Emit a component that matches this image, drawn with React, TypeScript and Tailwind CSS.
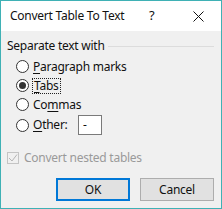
import React from "react";

const font = { fontFamily: '"Segoe UI", "Noto Sans", "Liberation Sans", sans-serif' };

function Radio({ checked }: { checked?: boolean }) {
    return (
        <span className="w-[13px] h-[13px] rounded-full border border-[#333] bg-white flex items-center justify-center shrink-0">
            {checked && <span className="w-[7px] h-[7px] rounded-full bg-[#333]" />}
        </span>
    );
}

function Option({ label, u, rest, checked, focus }: { label: string; u: string; rest: string; checked?: boolean; focus?: boolean }) {
    return (
        <div className="flex items-center h-[19px] pl-[9px] gap-[3px]">
            <Radio checked={checked} />
            <span className={focus ? "border border-dotted border-[#222] px-px leading-[14px]" : "px-px"}>
                {label}
                <span className="underline underline-offset-2">{u}</span>
                {rest}
            </span>
        </div>
    );
}

export default function App() {
    return (
        <div
            className="w-[222px] h-[209px] border border-[#3fb1b5] flex flex-col text-[12px] tracking-[-0.25px] text-[#111] select-none"
            style={font}
        >
            {/* Title bar */}
            <div className="h-[30px] bg-white flex items-center pl-[9px] shrink-0">
                <span className="flex-1">Convert Table To Text</span>
                <span className="w-[10px] mr-[34px] text-[13px]">?</span>
                <svg width="11" height="11" viewBox="0 0 11 11" className="mr-[17px]">
                    <path d="M0.5 0.5 L10.5 10.5 M10.5 0.5 L0.5 10.5" stroke="#111" strokeWidth="1" />
                </svg>
            </div>

            {/* Body */}
            <div className="flex-1 bg-[#f0f0f0] flex flex-col pt-[7px] px-[6px]">
                <div className="flex items-center h-[16px] gap-[3px]">
                    <span>Separate text with</span>
                    <span className="flex-1 h-px bg-[#dcdcdc] mr-[1px]" />
                </div>

                <div className="flex flex-col mt-[3px]">
                    <Option label="" u="P" rest="aragraph marks" />
                    <Option label="" u="T" rest="abs" checked focus />
                    <Option label="Co" u="m" rest="mas" />
                    <div className="flex items-center h-[22px] pl-[9px] gap-[3px]">
                        <Radio />
                        <span className="px-px w-[43px] shrink-0">
                            <span className="underline underline-offset-2">O</span>ther:
                        </span>
                        <div className="w-[24px] h-[20px] bg-white border border-[#7a7a7a] flex items-center pl-[4px]">-</div>
                    </div>
                </div>

                <div className="flex items-center h-[16px] mt-[14px] gap-[5px] text-[#9a9a9a]">
                    <span className="w-[12px] h-[12px] border border-[#c4c4c4] flex items-center justify-center">
                        <svg width="10" height="10" viewBox="0 0 10 10">
                            <path d="M1 5 L4 8 L9 1.5" stroke="#b5b5b5" strokeWidth="1" fill="none" />
                        </svg>
                    </span>
                    <span>Convert nested tables</span>
                </div>

                <div className="flex justify-end gap-[10px] mt-[12px] pr-[1px]">
                    <button className="w-[74px] h-[23px] bg-[#e1e1e1] border-2 border-[#0078d7] flex items-center justify-center">
                        OK
                    </button>
                    <button className="w-[74px] h-[23px] bg-[#e1e1e1] border border-[#adadad] flex items-center justify-center">
                        Cancel
                    </button>
                </div>
            </div>
        </div>
    );
}
